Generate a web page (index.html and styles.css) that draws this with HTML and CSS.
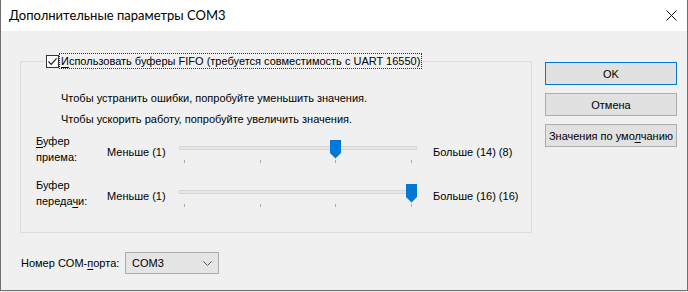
FILE: index.html
```html
<!DOCTYPE html>
<html>
<head>
    <title>Дополнительные параметры COM3</title>
    <link rel="stylesheet" href="styles.css">
</head>
<body>
    <div class="window">
        <div class="titlebar">
            <span class="title">Дополнительные параметры COM3</span>
            <svg class="close" width="11" height="11" viewBox="0 0 11 11">
                <path d="M0.5 0.5 L10.5 10.5 M10.5 0.5 L0.5 10.5" stroke="#111" stroke-width="1"></path>
            </svg>
        </div>

        <div class="content">
            <div class="left">
                <fieldset class="group">
                    <legend class="fifo">
                        <span class="check">
                            <svg width="11" height="11" viewBox="0 0 11 11">
                                <path d="M1.5 5.5 L4.2 8.3 L9.6 2.4" fill="none" stroke="#222" stroke-width="1.2"></path>
                            </svg>
                        </span>
                        <span class="focus"><u>И</u>спользовать буферы FIFO (требуется совместимость с UART 16550)</span>
                    </legend>

                    <div class="group-body">
                        <div class="hint first">Чтобы устранить ошибки, попробуйте уменьшить значения.</div>
                        <div class="hint">Чтобы ускорить работу, попробуйте увеличить значения.</div>

                        <div class="slider-row top">
                            <div class="row-label"><u>Б</u>уфер<br>приема:</div>
                            <div class="min-label">Меньше (1)</div>
                            <div class="slider">
                                <div class="track"></div>
                                <div class="ticks"><i></i><i></i><i></i><i></i></div>
                                <svg class="thumb" style="left: 151px" width="11" height="19" viewBox="0 0 11 19">
                                    <path d="M0 0 H11 V13 L5.5 18.5 L0 13 Z" fill="#0078d7"></path>
                                </svg>
                            </div>
                            <div class="max-label">Больше (14) (8)</div>
                        </div>

                        <div class="slider-row">
                            <div class="row-label">Буфер<br>переда<u>ч</u>и:</div>
                            <div class="min-label">Меньше (1)</div>
                            <div class="slider">
                                <div class="track"></div>
                                <div class="ticks"><i></i><i></i><i></i><i></i></div>
                                <svg class="thumb" style="left: 227px" width="11" height="19" viewBox="0 0 11 19">
                                    <path d="M0 0 H11 V13 L5.5 18.5 L0 13 Z" fill="#0078d7"></path>
                                </svg>
                            </div>
                            <div class="max-label">Больше (16) (16)</div>
                        </div>
                    </div>
                </fieldset>

                <div class="port-row">
                    <span class="port-label">Номер COM-<u>п</u>орта:</span>
                    <div class="combo">
                        <span>COM3</span>
                        <svg width="9" height="5" viewBox="0 0 9 5">
                            <path d="M0.5 0.5 L4.5 4.5 L8.5 0.5" fill="none" stroke="#555" stroke-width="1"></path>
                        </svg>
                    </div>
                </div>
            </div>

            <div class="buttons">
                <button class="btn default">OK</button>
                <button class="btn">Отмена</button>
                <button class="btn">Значения по умо<u>л</u>чанию</button>
            </div>
        </div>
    </div>
</body>
</html>
```

FILE: styles.css
```css
/* Page */
body {
    margin: 0;
    background: #e9e9e9;
    font-family: "Liberation Sans", Arial, sans-serif;
    font-size: 11px;
    color: #000;
}

u {
    text-decoration: underline;
    text-underline-offset: 2px;
}

/* Window frame */
.window {
    width: 688px;
    height: 291px;
    box-sizing: border-box;
    background: #f0f0f0;
    border: 1px solid #6f6f6f;
    border-top: none;
}

.titlebar {
    height: 31px;
    background: #fff;
    display: flex;
    align-items: center;
    justify-content: space-between;
    padding: 0 10px 0 8px;
}

.title {
    font-family: Lato, "Noto Sans", sans-serif;
    font-size: 13px;
    padding-bottom: 1px;
}

/* Main layout */
.content {
    display: flex;
    padding: 22px 0 0 19px;
}

.left {
    width: 512px;
}

/* Group box */
.group {
    margin: 0;
    padding: 0;
    border: 1px solid #dcdcdc;
    min-width: 0;
}

.group-body {
    padding: 0 0 11px 40px;
}

.fifo {
    margin-left: 23px;
    padding: 0 2px;
    height: 16px;
    display: flex;
    align-items: center;
}

.check {
    width: 11px;
    height: 11px;
    border: 1px solid #333;
    background: #fff;
    display: flex;
}

.focus {
    margin-left: 1px;
    padding: 0 1px;
    line-height: 14px;
    outline: 1px dotted #333;
    outline-offset: 0;
}

.hint {
    line-height: 16px;
    margin-top: 5px;
}

.hint.first {
    margin-top: 21px;
}

/* Trackbars */
.slider-row {
    display: flex;
    height: 44px;
    margin-left: -25px;
}

.slider-row.top {
    margin-top: 6px;
}

.row-label {
    width: 71px;
    line-height: 16px;
}

.min-label {
    width: 72px;
    margin-top: 11px;
    line-height: 16px;
}

.slider {
    position: relative;
    width: 238px;
    height: 32px;
}

.track {
    margin-top: 13px;
    height: 2px;
    border: 1px solid #d6d6d6;
    background: #e7e7e7;
}

.ticks {
    display: flex;
    justify-content: space-between;
    padding: 0 5px;
    margin-top: 10px;
}

.ticks i {
    width: 1px;
    height: 3px;
    background: #a9a9a9;
}

.thumb {
    position: absolute;
    top: 7px;
}

.max-label {
    margin-left: 16px;
    margin-top: 11px;
    line-height: 16px;
}

/* COM port selector */
.port-row {
    display: flex;
    align-items: center;
    margin-top: 19px;
    margin-left: 1px;
}

.port-label {
    width: 104px;
}

.combo {
    width: 80px;
    height: 20px;
    border: 1px solid #adadad;
    background: #e5e5e5;
    display: flex;
    align-items: center;
    justify-content: space-between;
    padding: 0 6px;
}

/* Dialog buttons */
.buttons {
    display: flex;
    flex-direction: column;
    gap: 8px;
    margin-left: 13px;
    margin-top: 9px;
}

.btn {
    width: 132px;
    height: 23px;
    padding: 0;
    font-family: inherit;
    font-size: 11px;
    background: #e1e1e1;
    border: 1px solid #adadad;
    border-radius: 0;
    color: #000;
}

.btn.default {
    border-color: #0078d7;
}
```
